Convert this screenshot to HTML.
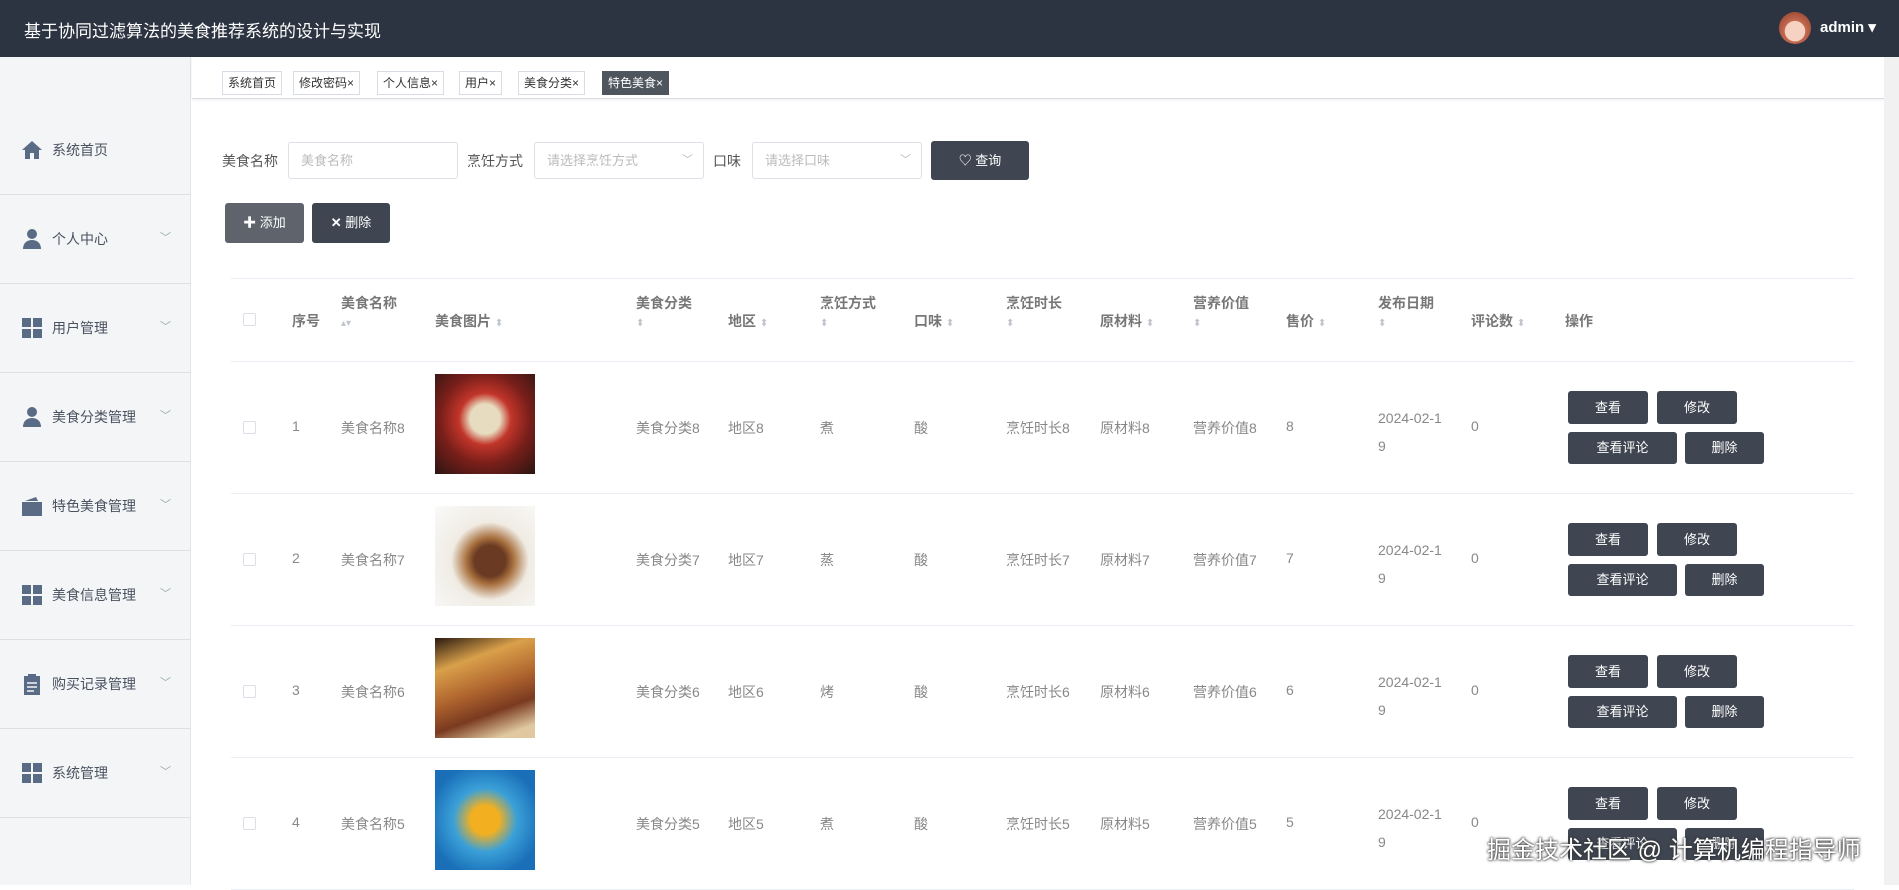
<!DOCTYPE html>
<html><head><meta charset="utf-8"><style>
*{margin:0;padding:0;box-sizing:border-box}
body{width:1899px;height:885px;overflow:hidden;background:#fff;font-family:"Liberation Sans","Noto Sans CJK SC",sans-serif;position:relative;color:#606266}
.a{position:absolute}
.hdr{left:0;top:0;width:1899px;height:57px;background:#2b3440;color:#fff}
.side{left:0;top:57px;width:191px;height:828px;background:#f4f5f7;border-right:1px solid #e4e6ea}
.mi{position:absolute;left:0;width:191px;height:89px;border-bottom:1px solid #dde0e4;font-size:14px;color:#4a5260}
.mi span.t{position:absolute;left:52px;top:34px}
.mi .ic{position:absolute;left:21px;top:33px;width:22px;height:22px}
.mi .ar{position:absolute;left:160px;top:34px;font-size:11px;color:#9aa}
.tab{position:absolute;top:71px;height:24px;border:1px solid #d8dce5;font-size:12px;line-height:22px;padding:0 5px;color:#333;background:#fff}
.btn{position:absolute;border-radius:3px;color:#fff;font-size:13px;text-align:center;background:#3f4651}
.inp{position:absolute;top:142px;height:37px;border:1px solid #dcdfe6;border-radius:3px;font-size:13px;color:#bbb;line-height:35px;padding-left:12px;background:#fff}
.lbl{position:absolute;top:151px;font-size:14px;color:#555}
.th{position:absolute;font-size:14px;color:#777;font-weight:bold}
.td{position:absolute;font-size:14px;color:#888}
.s{color:#c0c4cc;font-size:10px;font-weight:normal}
.row{position:absolute;left:231px;width:1623px;height:132px;border-bottom:1px solid #ebeef5}
.cb{position:absolute;left:243px;width:13px;height:13px;border:1px solid #dcdfe6;border-radius:2px;background:#fff}
</style></head><body>
<div class="a hdr"><div class="a" style="left:24px;top:17px;font-size:17px">基于协同过滤算法的美食推荐系统的设计与实现</div>
<div class="a" style="left:1779px;top:12px;width:32px;height:32px;border-radius:50%;background:radial-gradient(circle at 50% 60%,#f6d2c2 40%,#c46a50 42%,#8a3a2a)"></div>
<div class="a" style="left:1820px;top:18px;font-size:15px;font-weight:bold">admin ▾</div></div>
<div class="a side">
<div class="mi" style="top:49px"><svg class="ic" viewBox="0 0 22 22"><path d="M11 2L1 11h3v9h5v-6h4v6h5v-9h3z" fill="#5a6b85"/></svg><span class="t">系统首页</span></div>
<div class="mi" style="top:138px"><svg class="ic" viewBox="0 0 22 22"><circle cx="11" cy="6" r="5" fill="#5a6b85"/><path d="M2 21c0-6 4-9 9-9s9 3 9 9z" fill="#5a6b85"/></svg><span class="t">个人中心</span><span class="ar">﹀</span></div>
<div class="mi" style="top:227px"><svg class="ic" viewBox="0 0 22 22" fill="#5a6b85"><rect x="1" y="1" width="9" height="9"/><rect x="12" y="1" width="9" height="9"/><rect x="1" y="12" width="9" height="9"/><rect x="12" y="12" width="9" height="9"/></svg><span class="t">用户管理</span><span class="ar">﹀</span></div>
<div class="mi" style="top:316px"><svg class="ic" viewBox="0 0 22 22"><circle cx="11" cy="6" r="5" fill="#5a6b85"/><path d="M2 21c0-6 4-9 9-9s9 3 9 9z" fill="#5a6b85"/></svg><span class="t">美食分类管理</span><span class="ar">﹀</span></div>
<div class="mi" style="top:405px"><svg class="ic" viewBox="0 0 22 22" fill="#5a6b85"><path d="M1 7h20v14H1z"/><path d="M4 6l11-4 2 4z"/></svg><span class="t">特色美食管理</span><span class="ar">﹀</span></div>
<div class="mi" style="top:494px"><svg class="ic" viewBox="0 0 22 22" fill="#5a6b85"><rect x="1" y="1" width="9" height="9"/><rect x="12" y="1" width="9" height="9"/><rect x="1" y="12" width="9" height="9"/><rect x="12" y="12" width="9" height="9"/></svg><span class="t">美食信息管理</span><span class="ar">﹀</span></div>
<div class="mi" style="top:583px"><svg class="ic" viewBox="0 0 22 22" fill="#5a6b85"><path d="M3 3h16v19H3z"/><rect x="7" y="1" width="8" height="4" fill="#5a6b85"/><path d="M6 10h10M6 14h10M6 18h7" stroke="#f4f5f7" stroke-width="1.5"/></svg><span class="t">购买记录管理</span><span class="ar">﹀</span></div>
<div class="mi" style="top:672px"><svg class="ic" viewBox="0 0 22 22" fill="#5a6b85"><rect x="1" y="1" width="9" height="9"/><rect x="12" y="1" width="9" height="9"/><rect x="1" y="12" width="9" height="9"/><rect x="12" y="12" width="9" height="9"/></svg><span class="t">系统管理</span><span class="ar">﹀</span></div>
</div>
<div class="a" style="left:192px;top:57px;width:1692px;height:42px;border-bottom:1px solid #d8dce5;box-shadow:0 1px 3px rgba(0,0,0,.08)"></div>
<div class="a" style="left:1884px;top:57px;width:15px;height:828px;background:#f1f1f1"></div>
<div class="tab" style="left:222px">系统首页</div>
<div class="tab" style="left:293px">修改密码×</div>
<div class="tab" style="left:377px">个人信息×</div>
<div class="tab" style="left:459px">用户×</div>
<div class="tab" style="left:518px">美食分类×</div>
<div class="tab" style="left:602px;background:#4f555d;color:#fff;border-color:#4f555d">特色美食×</div>
<div class="lbl" style="left:222px">美食名称</div>
<div class="inp" style="left:288px;width:170px">美食名称</div>
<div class="lbl" style="left:467px">烹饪方式</div>
<div class="inp" style="left:534px;width:170px">请选择烹饪方式<span style="position:absolute;right:10px;font-size:11px">﹀</span></div>
<div class="lbl" style="left:713px">口味</div>
<div class="inp" style="left:752px;width:170px">请选择口味<span style="position:absolute;right:10px;font-size:11px">﹀</span></div>
<div class="btn" style="left:931px;top:141px;width:98px;height:39px;line-height:39px">♡ 查询</div>
<div class="btn" style="left:225px;top:203px;width:79px;height:40px;line-height:40px;background:#5f646c"><b>✚</b> 添加</div>
<div class="btn" style="left:312px;top:203px;width:78px;height:40px;line-height:40px"><b>✕</b> 删除</div>
<div class="row" style="top:278px;height:84px;border-top:1px solid #ebeef5"></div>
<div class="cb" style="top:313px"></div>
<div class="th" style="left:292px;top:311px">序号</div>
<div class="th" style="left:341px;top:293px">美食名称<br><span class="s">▴▾</span></div>
<div class="th" style="left:435px;top:311px">美食图片 <span class="s">⬍</span></div>
<div class="th" style="left:636px;top:293px">美食分类<br><span class="s">⬍</span></div>
<div class="th" style="left:728px;top:311px">地区 <span class="s">⬍</span></div>
<div class="th" style="left:820px;top:293px">烹饪方式<br><span class="s">⬍</span></div>
<div class="th" style="left:914px;top:311px">口味 <span class="s">⬍</span></div>
<div class="th" style="left:1006px;top:293px">烹饪时长<br><span class="s">⬍</span></div>
<div class="th" style="left:1100px;top:311px">原材料 <span class="s">⬍</span></div>
<div class="th" style="left:1193px;top:293px">营养价值<br><span class="s">⬍</span></div>
<div class="th" style="left:1286px;top:311px">售价 <span class="s">⬍</span></div>
<div class="th" style="left:1378px;top:293px">发布日期<br><span class="s">⬍</span></div>
<div class="th" style="left:1471px;top:311px">评论数 <span class="s">⬍</span></div>
<div class="th" style="left:1565px;top:311px">操作</div>

<!-- rows -->
<div class="row" style="top:362px"></div>
<div class="row" style="top:494px"></div>
<div class="row" style="top:626px"></div>
<div class="row" style="top:758px"></div>

<div id="rows"></div>
<div class="cb" style="top:421px"></div><div class="td" style="left:292px;top:418px">1</div><div class="td" style="left:341px;top:418px">美食名称8</div>
<div class="a" style="left:435px;top:374px;width:100px;height:100px;background:radial-gradient(circle at 50% 45%,#e8dcc0 20%,#c2352a 35%,#7a1f1a 60%,#2a1512)"></div>
<div class="td" style="left:636px;top:418px">美食分类8</div><div class="td" style="left:728px;top:418px">地区8</div><div class="td" style="left:820px;top:418px">煮</div><div class="td" style="left:914px;top:418px">酸</div><div class="td" style="left:1006px;top:418px">烹饪时长8</div><div class="td" style="left:1100px;top:418px">原材料8</div><div class="td" style="left:1193px;top:418px">营养价值8</div><div class="td" style="left:1286px;top:418px">8</div><div class="td" style="left:1378px;top:404px;line-height:28px">2024-02-1<br>9</div><div class="td" style="left:1471px;top:418px">0</div>
<div class="btn" style="left:1568px;top:391px;width:80px;height:33px;line-height:33px">查看</div><div class="btn" style="left:1657px;top:391px;width:80px;height:33px;line-height:33px">修改</div><div class="btn" style="left:1568px;top:432px;width:109px;height:32px;line-height:32px">查看评论</div><div class="btn" style="left:1685px;top:432px;width:79px;height:32px;line-height:32px">删除</div>

<div class="cb" style="top:553px"></div><div class="td" style="left:292px;top:550px">2</div><div class="td" style="left:341px;top:550px">美食名称7</div>
<div class="a" style="left:435px;top:506px;width:100px;height:100px;background:radial-gradient(circle at 55% 55%,#6b3a22 20%,#a8703e 30%,#f0ece4 50%,#fafafa)"></div>
<div class="td" style="left:636px;top:550px">美食分类7</div><div class="td" style="left:728px;top:550px">地区7</div><div class="td" style="left:820px;top:550px">蒸</div><div class="td" style="left:914px;top:550px">酸</div><div class="td" style="left:1006px;top:550px">烹饪时长7</div><div class="td" style="left:1100px;top:550px">原材料7</div><div class="td" style="left:1193px;top:550px">营养价值7</div><div class="td" style="left:1286px;top:550px">7</div><div class="td" style="left:1378px;top:536px;line-height:28px">2024-02-1<br>9</div><div class="td" style="left:1471px;top:550px">0</div>
<div class="btn" style="left:1568px;top:523px;width:80px;height:33px;line-height:33px">查看</div><div class="btn" style="left:1657px;top:523px;width:80px;height:33px;line-height:33px">修改</div><div class="btn" style="left:1568px;top:564px;width:109px;height:32px;line-height:32px">查看评论</div><div class="btn" style="left:1685px;top:564px;width:79px;height:32px;line-height:32px">删除</div>

<div class="cb" style="top:685px"></div><div class="td" style="left:292px;top:682px">3</div><div class="td" style="left:341px;top:682px">美食名称6</div>
<div class="a" style="left:435px;top:638px;width:100px;height:100px;background:linear-gradient(160deg,#2a1a10 0%,#d9a04a 25%,#b0652e 50%,#7a3a20 70%,#e0c8a0 90%)"></div>
<div class="td" style="left:636px;top:682px">美食分类6</div><div class="td" style="left:728px;top:682px">地区6</div><div class="td" style="left:820px;top:682px">烤</div><div class="td" style="left:914px;top:682px">酸</div><div class="td" style="left:1006px;top:682px">烹饪时长6</div><div class="td" style="left:1100px;top:682px">原材料6</div><div class="td" style="left:1193px;top:682px">营养价值6</div><div class="td" style="left:1286px;top:682px">6</div><div class="td" style="left:1378px;top:668px;line-height:28px">2024-02-1<br>9</div><div class="td" style="left:1471px;top:682px">0</div>
<div class="btn" style="left:1568px;top:655px;width:80px;height:33px;line-height:33px">查看</div><div class="btn" style="left:1657px;top:655px;width:80px;height:33px;line-height:33px">修改</div><div class="btn" style="left:1568px;top:696px;width:109px;height:32px;line-height:32px">查看评论</div><div class="btn" style="left:1685px;top:696px;width:79px;height:32px;line-height:32px">删除</div>

<div class="cb" style="top:817px"></div><div class="td" style="left:292px;top:814px">4</div><div class="td" style="left:341px;top:814px">美食名称5</div>
<div class="a" style="left:435px;top:770px;width:100px;height:100px;background:radial-gradient(circle at 50% 50%,#f2b020 20%,#3aa0d8 45%,#1a6fb8 80%)"></div>
<div class="td" style="left:636px;top:814px">美食分类5</div><div class="td" style="left:728px;top:814px">地区5</div><div class="td" style="left:820px;top:814px">煮</div><div class="td" style="left:914px;top:814px">酸</div><div class="td" style="left:1006px;top:814px">烹饪时长5</div><div class="td" style="left:1100px;top:814px">原材料5</div><div class="td" style="left:1193px;top:814px">营养价值5</div><div class="td" style="left:1286px;top:814px">5</div><div class="td" style="left:1378px;top:800px;line-height:28px">2024-02-1<br>9</div><div class="td" style="left:1471px;top:814px">0</div>
<div class="btn" style="left:1568px;top:787px;width:80px;height:33px;line-height:33px">查看</div><div class="btn" style="left:1657px;top:787px;width:80px;height:33px;line-height:33px">修改</div><div class="btn" style="left:1568px;top:828px;width:109px;height:32px;line-height:32px">查看评论</div><div class="btn" style="left:1685px;top:828px;width:79px;height:32px;line-height:32px">删除</div>

<div class="a" style="left:1487px;top:830px;font-size:24px;color:#fff;text-shadow:0 0 3px #333,0 0 2px #333">掘金技术社区 @ 计算机编程指导师</div>
</body></html>
